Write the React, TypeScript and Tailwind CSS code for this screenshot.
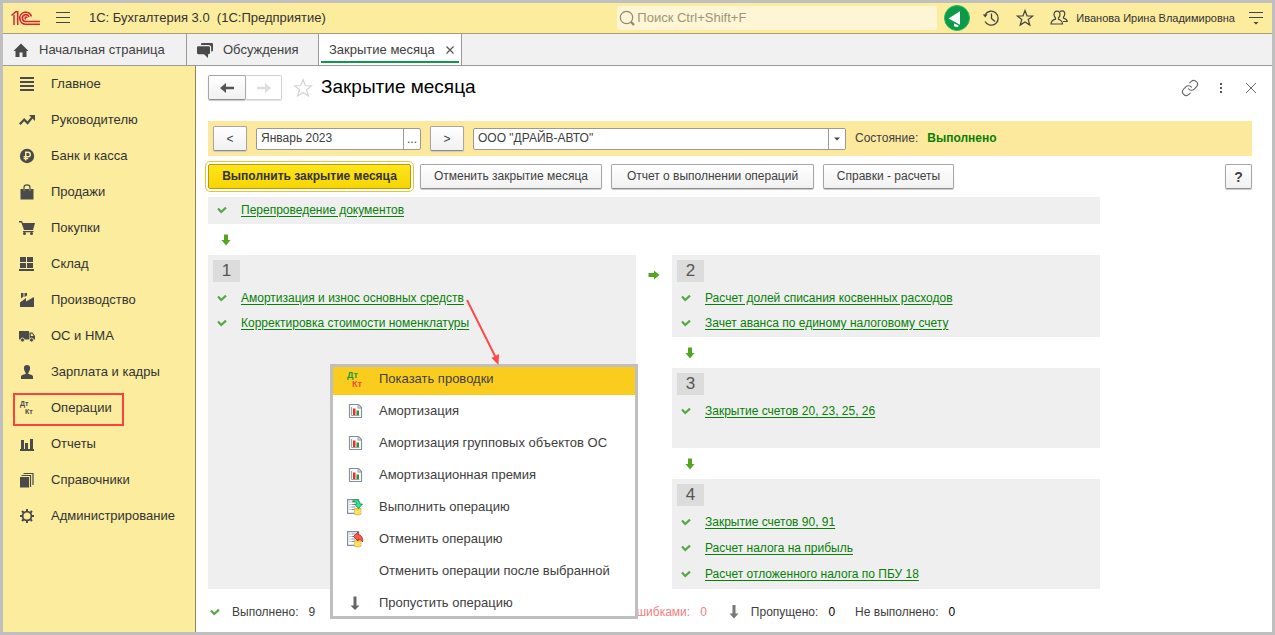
import React from "react";

type IconProps = { children: React.ReactNode; className?: string };

function Glyph({ children, className = "" }: IconProps) {
  return (
    <svg viewBox="0 0 16 16" width="16" height="16" aria-hidden="true" className={`shrink-0 ${className}`}>
      {children}
    </svg>
  );
}

const dark = "#4a4a4a";

const sections: { label: string; icon: React.ReactNode; marked?: boolean }[] = [
  { label: "Главное", icon: <path fill={dark} shapeRendering="crispEdges" d="M1 1h14v2H1zM1 5h14v2H1zM1 9h14v2H1zM1 13h14v2H1z" /> },
  {
    label: "Руководителю",
    icon: (
      <>
        <path d="M.8 12.3 5.2 7.6 8.6 11 13 5.6" fill="none" stroke={dark} strokeWidth="2.2" />
        <path d="M10 3h6v6z" fill={dark} />
      </>
    ),
  },
  {
    label: "Банк и касса",
    icon: (
      <>
        <circle cx="8" cy="8" r="7.2" fill={dark} />
        <path d="M6.7 12.5V4.3h2.400a2.200 2.200 0 0 1 0 4.400H4.600M4.600 10.600h4.600" fill="none" stroke="#fbec9e" strokeWidth="1.4" />
      </>
    ),
  },
  {
    label: "Продажи",
    icon: (
      <>
        <path d="M1.500 5h3v2h1.200V5h4.600v2h1.200V5h3v10.500h-13z" fill={dark} />
        <path d="M5 7V3.200C5 1 6.200.8 8 .8s3 .2 3 2.400V7" fill="none" stroke={dark} strokeWidth="1.2" />
      </>
    ),
  },
  {
    label: "Покупки",
    icon: (
      <>
        <path d="M0 1h3l.8 2H16l-2 7H5L2.300 2.400H0zM4 11h10.500v1.300H4z" fill={dark} />
        <circle cx="5.500" cy="13.500" r="1.500" fill={dark} />
        <circle cx="12.500" cy="13.500" r="1.500" fill={dark} />
      </>
    ),
  },
  { label: "Склад", icon: <path fill={dark} shapeRendering="crispEdges" d="M1 1h6v5H1zM8 1h6v5H8zM1 7h6v5H1zM8 7h6v5H8zM0 13h15v2H0z" /> },
  { label: "Производство", icon: <path fill={dark} d="M1 15V10.500L7 6v3.500L15 5v10zM2 1h2.500v3.500L2 6.500zM5.500 1H8v2.500L5.500 5z" /> },
  {
    label: "ОС и НМА",
    icon: (
      <>
        <path d="M0 3h10v8.500H0zM10.500 4.500h3L16 8v3.500h-5.500z" fill={dark} />
        <path d="M11.800 5.700h1.500L14.600 8h-2.800z" fill="#fbec9e" />
        <circle cx="3.500" cy="12" r="2" fill={dark} stroke="#fbec9e" strokeWidth=".8" />
        <circle cx="12.500" cy="12" r="2" fill={dark} stroke="#fbec9e" strokeWidth=".8" />
      </>
    ),
  },
  { label: "Зарплата и кадры", icon: <path fill={dark} d="M8 1c2 0 3.100 1.200 3.100 3S9.800 8.500 9.300 9v1c3 .6 4.700 1.200 4.700 2.600V15H2v-2.400C2 11.200 3.700 10.600 6.700 10V9C6.200 8.500 4.900 5.800 4.900 4S6 1 8 1z" /> },
  {
    label: "Операции",
    marked: true,
    icon: (
      <g fill={dark} fontFamily="Liberation Sans, sans-serif" fontWeight="700" fontSize="7">
        <text x="1" y="6">Дт</text>
        <text x="6" y="14">Кт</text>
      </g>
    ),
  },
  { label: "Отчеты", icon: <path fill={dark} shapeRendering="crispEdges" d="M2 4h3v9h1V7h3v6h2V3h3v10h1v2H1v-2h1z" /> },
  {
    label: "Справочники",
    icon: (
      <>
        <path d="M1 5h9v10.500H1z" fill={dark} />
        <path d="M2.500 3.500h9V15M4.500 1.500h9.500V13" fill="none" stroke={dark} strokeWidth="1.200" />
      </>
    ),
  },
  {
    label: "Администрирование",
    icon: (
      <g fill="none" stroke={dark}>
        <circle cx="8" cy="8" r="4.400" strokeWidth="1.800" />
        <path strokeWidth="2" d="M8 1v2.500M8 12.500V15M1 8h2.500M12.500 8H15M3 3l1.700 1.700M11.300 11.300 13 13M3 13l1.700-1.700M11.300 4.700 13 3" />
      </g>
    ),
  },
];

const reportIcon = (
  <>
    <path d="M2.500 1.500h9l3 3v10h-12z" fill="#fff" stroke="#8492a0" strokeWidth="1.200" />
    <path d="M11 1.500v3.500h3.500" fill="none" stroke="#8492a0" />
    <path d="M4.500 4v8.500h8" fill="none" stroke="#9aa5b0" />
    <path d="M6 5.500h2.500V12H6z" fill="#f22b1e" />
    <path d="M9.500 7.500H12V12H9.500z" fill="#2f8f2c" />
  </>
);

const sheet = (
  <>
    <path d="M.6.600h11v13.800H.600z" fill="#fff" stroke="#7f8fa0" strokeWidth="1.200" />
    <path d="M2.500 3h1M4.500 3h5M2.500 5.500h1M4.500 5.500h5M2.500 8h1M4.500 8h4M2.500 10.500h1M4.500 10.500h3" stroke="#8492a0" />
    <path d="M7.500 9.500h6.500V15c-1 1.200-5.500 1.200-6.500 0z" fill="#f4cf3e" stroke="#c9a021" strokeWidth=".6" />
    <path d="M7.500 11.500c1.500 1 5 1 6.500 0M7.500 13.500c1.500 1 5 1 6.500 0" fill="none" stroke="#fff3a8" strokeWidth=".9" />
  </>
);

const menu: { label: string; icon?: React.ReactNode }[] = [
  {
    label: "Показать проводки",
    icon: (
      <g fontFamily="Liberation Sans, sans-serif" fontWeight="700" fontSize="9">
        <text x="0" y="7" fill="#169a3c">Дт</text>
        <text x="5" y="16" fill="#e8503a">Кт</text>
      </g>
    ),
  },
  { label: "Амортизация", icon: reportIcon },
  { label: "Амортизация групповых объектов ОС", icon: reportIcon },
  { label: "Амортизационная премия", icon: reportIcon },
  {
    label: "Выполнить операцию",
    icon: (
      <>
        {sheet}
        <path d="M5.500 2.500C6.500-.5 13 0 13 5h2.500l-4 4.500-4-4.500h2.300c0-2-2.300-3-4.300-2.500z" fill="#2be58a" stroke="#128a4b" strokeWidth=".8" />
      </>
    ),
  },
  {
    label: "Отменить операцию",
    icon: (
      <>
        {sheet}
        <path d="M6.500 5.500 11 1v2.500c3.500.5 5 3.500 4.500 7.500-1-2-2.500-2.700-4.500-2.700V10z" fill="#fb5a4a" stroke="#b3201a" strokeWidth=".8" />
      </>
    ),
  },
  { label: "Отменить операции после выбранной" },
  { label: "Пропустить операцию", icon: <path fill="#666" d="M6.500 1.500h3V10.500h3L8 15l-4.500-4.500h3z" /> },
];

function Check() {
  return (
    <svg viewBox="0 0 10 10" width="10" height="10" aria-hidden="true" className="shrink-0">
      <path d="M1 3.500 4.200 7 9 2.600" fill="none" stroke="#55a845" strokeWidth="2.200" />
    </svg>
  );
}

function Arrow({ right = false }: { right?: boolean }) {
  return (
    <svg viewBox="0 0 12 12" width="12" height="12" aria-hidden="true" className={`shrink-0 ${right ? "-rotate-90" : ""}`}>
      <path d="M4 .5h4V6h2.500L6 11.500 1.500 6H4z" fill="#54a51f" />
    </svg>
  );
}

function Operation({ label, height = "h-[25px]" }: { label: string; height?: string }) {
  return (
    <li className={`flex items-center gap-3.5 pl-1 ${height}`}>
      <Check />
      <a href="#" className="text-[#087f08] underline underline-offset-2">{label}</a>
    </li>
  );
}

function Stage({ n, items, className = "", row }: { n: number; items: string[]; className?: string; row?: string }) {
  return (
    <section className={`bg-[#efefef] p-[5px] pb-0.5 ${className}`}>
      <h2 className="flex h-[22px] w-[27px] items-center justify-center bg-[#dcdcdc] text-[17px] text-[#555]">{n}</h2>
      <ul className="mt-[3px]">
        {items.map((item) => (
          <Operation key={item} label={item} height={row} />
        ))}
      </ul>
    </section>
  );
}

function DownGap() {
  return (
    <div className="flex h-[31px] items-center pl-3">
      <Arrow />
    </div>
  );
}

const buttonBase = "h-[25px] shrink-0 rounded-[2px] border border-[#a6a6a6] border-b-[#8c8c8c] bg-linear-to-b from-white to-[#f1f1f1] shadow-[0_1px_1px_#c8c8c8]";

export default function App() {
  return (
    <div className="flex min-h-screen flex-col border-[3px] border-[#bfbfbf] bg-white font-['Liberation_Sans',Arial,sans-serif] text-xs text-[#404040]">
      <header className="flex h-[31px] items-center border-b border-[#a8a074] bg-[#fbec9e] pr-[9px] pl-2">
        <svg viewBox="0 0 30 16" width="30" height="16" role="img" aria-label="1С" className="shrink-0">
          <g fill="none" stroke="#d8232a">
            <path strokeWidth="1.500" d="M.5 5.500 4.700 1.700M3 5.500V15M6.700 1v14M2.500 5.500h1M4 1.700h3" />
            <path strokeWidth="1.600" d="M20.500 6.500A6 6 0 1 0 15 14.200H29" />
            <path strokeWidth="1.600" d="M18 7A3.400 3.400 0 1 0 15 11.500H29" />
            <path strokeWidth="1.400" d="M16 8a1 1 0 1 0-1 1" />
          </g>
        </svg>
        <button type="button" aria-label="Главное меню" className="ml-[15px] shrink-0">
          <svg viewBox="0 0 14 12" width="14" height="12" shapeRendering="crispEdges">
            <path d="M0 0h14v1H0zM0 5h14v1H0zM0 10h14v1H0z" fill="#444" />
          </svg>
        </button>
        <h1 className="ml-[19px] text-[13px] whitespace-pre text-[#333]">1С: Бухгалтерия 3.0  (1С:Предприятие)</h1>
        <label className="ml-auto flex h-6 w-80 items-center gap-0.5 rounded-[2px] bg-[#fdf5d4] pl-0.5">
          <svg viewBox="0 0 16 16" width="16" height="16" aria-hidden="true" className="shrink-0">
            <circle cx="7.500" cy="7.500" r="6.200" fill="none" stroke="#8d8975" strokeWidth="1.200" />
            <path d="m12 12 3 3" stroke="#8d8975" strokeWidth="2.400" />
          </svg>
          <input type="search" aria-label="Поиск" placeholder="Поиск Ctrl+Shift+F" className="min-w-0 flex-1 bg-transparent text-[13px] outline-none placeholder:text-[#9b967c]" />
        </label>
        <button type="button" aria-label="Уведомления" className="ml-[7px] shrink-0">
          <svg viewBox="0 0 26 26" width="26" height="26">
            <circle cx="13" cy="13" r="12.500" fill="#0c9a48" stroke="#2fb765" />
            <path d="M4.500 13.500 16 6.200v13.600zM10 18.500l4.500 1.800-.5 2-4-1z" fill="#fff" />
          </svg>
        </button>
        <button type="button" aria-label="История" className="ml-3 shrink-0">
          <svg viewBox="0 0 18 18" width="18" height="18" fill="none" stroke="#444" strokeWidth="1.300">
            <path d="M3.200 5.500A7 7 0 1 1 3 12.500M9.500 4.500v5l3.500 3" />
            <path d="M.8 5.600 3.200 8.500l2.400-3.200z" fill="#444" stroke="none" />
          </svg>
        </button>
        <button type="button" aria-label="Избранное" className="ml-4 shrink-0">
          <svg viewBox="0 0 18 18" width="18" height="18" fill="none" stroke="#444" strokeWidth="1.200">
            <path d="m9 1.500 2 5.300 5.700.2-4.500 3.500 1.600 5.500L9 12.900 4.200 16l1.600-5.500L1.300 7l5.700-.2z" />
          </svg>
        </button>
        <button type="button" className="ml-4 flex shrink-0 items-center gap-2 text-[11px] text-[#333]">
          <svg viewBox="0 0 18 18" width="18" height="18" aria-hidden="true" fill="none" stroke="#444" strokeWidth="1.200">
            <path d="M7 2.200c2 0 3 1.500 3 3.300 0 1.600-.8 2.700-1.500 3.500v1.200c2.500.8 3.800 1.700 4 4.800H1c.2-3.100 1.500-4 4.500-4.800V9C4.800 8.200 4 7.100 4 5.500c0-1.800 1-3.300 3-3.300z" />
            <path d="M10 2.800c.4-.7 1.200-1 2-1 1.700 0 2.800 1.200 2.800 3 0 1.400-.6 2.400-1.300 3.200v1.200c2.200.6 3.500 1.500 3.700 3.300H13" />
          </svg>
          Иванова Ирина Владимировна
        </button>
        <button type="button" aria-label="Настройки" className="ml-3.5 shrink-0">
          <svg viewBox="0 0 14 14" width="14" height="14">
            <path shapeRendering="crispEdges" d="M0 1h14v1H0zM0 6h14v1H0z" fill="#444" />
            <path d="M4.500 11h5L7 13.500z" fill="#444" />
          </svg>
        </button>
      </header>

      <nav aria-label="Открытые окна" className="flex h-8 border-b border-[#9a9a9a] bg-[#f1f1f1] text-[13px]">
        <a href="#" className="flex w-[184px] shrink-0 items-center gap-2.5 border-r border-[#9a9a9a] pl-2.5">
          <Glyph>
            <path d="M8 1.500 0.500 9h2v6h4v-4.500h3V15h4V9h2z" fill={dark} />
          </Glyph>
          Начальная страница
        </a>
        <a href="#" className="flex w-[132px] shrink-0 items-center gap-2.5 border-r border-[#9a9a9a] pl-2.5">
          <Glyph>
            <path d="M4 3V2.300Q4 1 5.300 1h9.400Q16 1 16 2.300v6q0 1.300-1.300 1.300H14.200V5.500q0-2.500-2.500-2.500z" fill={dark} />
            <path d="M1.300 4.200h10.400Q13 4.200 13 5.500v5.300q0 1.400-1.300 1.400H11V16l-4-3.800H1.300Q0 12.200 0 10.800V5.500q0-1.300 1.300-1.300z" fill={dark} />
          </Glyph>
          Обсуждения
        </a>
        <div className="flex w-[143px] shrink-0 flex-col border-r border-[#9a9a9a] bg-white px-0.5 pb-0.5">
          <div className="flex flex-1 items-center justify-between border-b-2 border-[#0c9a48] pt-1 pr-[5px] pl-2">
            <a href="#" aria-current="page">Закрытие месяца</a>
            <button type="button" aria-label="Закрыть вкладку">
              <svg viewBox="0 0 8 8" width="8" height="8" stroke="#555" strokeWidth="1.200">
                <path d="m.5.500 7 7M7.500.500l-7 7" />
              </svg>
            </button>
          </div>
        </div>
      </nav>

      <div className="flex flex-1">
        <nav aria-label="Разделы" className="w-[193px] shrink-0 border-r border-[#8f8758] bg-[#fbec9e] text-[13px] text-[#333]">
          <ul>
            {sections.map((s) => (
              <li key={s.label} className="relative">
                <a href="#" className="flex h-9 items-center gap-4 pl-4">
                  <Glyph>{s.icon}</Glyph>
                  {s.label}
                </a>
                {s.marked && <span className="pointer-events-none absolute top-[3px] left-2.5 h-[33px] w-[111px] border-2 border-[#ff4040]" />}
              </li>
            ))}
          </ul>
        </nav>

        <main className="min-w-0 flex-1 pt-[9px] pr-5 pl-3">
          <div className="flex h-[25px] items-center">
            <button type="button" aria-label="Назад" className={`${buttonBase} flex w-[38px] items-center justify-center`}>
              <svg viewBox="0 0 14 12" width="14" height="12">
                <path d="M0 6 6 1v3.700h8v2.600H6V11z" fill="#555" />
              </svg>
            </button>
            <button type="button" aria-label="Вперед" disabled className="flex h-[25px] w-9 items-center justify-center rounded-r-[2px] border border-l-0 border-[#d2d2d2] shadow-[0_1px_1px_#e0e0e0]">
              <svg viewBox="0 0 14 12" width="14" height="12">
                <path d="M14 6 8 1v3.700H0v2.600h8V11z" fill="#ddd" />
              </svg>
            </button>
            <button type="button" aria-label="В избранное" className="ml-[11px]">
              <svg viewBox="0 0 20 20" width="20" height="20" fill="none" stroke="#d4d4d4" strokeWidth="1.200">
                <path d="m10 1.500 2.300 6 6.200.3-4.900 3.900 1.700 6.300-5.300-3.500L4.700 18l1.700-6.300L1.500 7.800l6.200-.3z" />
              </svg>
            </button>
            <h2 className="ml-2 pb-0.5 text-[19px] text-black">Закрытие месяца</h2>
            <div className="-mr-[5px] ml-auto flex items-center">
              <button type="button" aria-label="Ссылка">
                <svg viewBox="0 0 24 24" width="18" height="18" fill="none" stroke="#666" strokeWidth="1.500" strokeLinecap="round">
                  <path d="M10 13a5 5 0 0 0 7.540.540l3-3a5 5 0 0 0-7.070-7.070l-1.720 1.710" />
                  <path d="M14 11a5 5 0 0 0-7.540-.540l-3 3a5 5 0 0 0 7.070 7.070l1.710-1.710" />
                </svg>
              </button>
              <button type="button" aria-label="Еще" className="ml-[19px]">
                <svg viewBox="0 0 6 12" width="6" height="12" shapeRendering="crispEdges">
                  <path d="M2 1h2v2H2zM2 5h2v2H2zM2 9h2v2H2z" fill="#555" />
                </svg>
              </button>
              <button type="button" aria-label="Закрыть" className="ml-[21px]">
                <svg viewBox="0 0 12 12" width="12" height="12" stroke="#666">
                  <path d="m1 1 10 10M11 1 1 11" />
                </svg>
              </button>
            </div>
          </div>

          <div className="mt-[21px] flex h-[35px] items-center bg-[#fce99e] px-[5px]">
            <button type="button" aria-label="Предыдущий месяц" className={`${buttonBase} w-[34px]`}>&lt;</button>
            <div className="ml-[9px] flex h-[22px] w-[165px] shrink-0 rounded-[2px] border border-[#999] bg-white">
              <input aria-label="Месяц" defaultValue="Январь 2023" className="min-w-0 flex-1 px-1 pb-0.5 outline-none" />
              <button type="button" aria-label="Выбрать месяц" className="w-[17px] border-l border-[#999]">...</button>
            </div>
            <button type="button" aria-label="Следующий месяц" className={`${buttonBase} ml-[9px] w-[34px]`}>&gt;</button>
            <div className="relative ml-[9px] h-[22px] max-w-[373px] flex-1 rounded-[2px] border border-[#999] bg-white">
              <select aria-label="Организация" className="h-full w-full appearance-none px-1 pb-0.5 outline-none">
                <option>ООО "ДРАЙВ-АВТО"</option>
              </select>
              <span className="pointer-events-none absolute inset-y-0 right-0 flex w-[17px] items-center justify-center border-l border-[#999] bg-white">
                <svg viewBox="0 0 6 4" width="6" height="4">
                  <path d="M0 .5h6l-3 3z" fill="#444" />
                </svg>
              </span>
            </div>
            <span className="ml-[9px] pb-0.5">Состояние:</span>
            <strong className="ml-[9px] pb-0.5 text-[#087f08]">Выполнено</strong>
          </div>

          <div className="mt-2 flex h-[25px] items-center gap-[9px]">
            <button type="button" className="h-[25px] w-[203px] shrink-0 rounded-[2px] border border-[#b39b0e] bg-linear-to-b from-[#ffe51a] to-[#f6d500] pb-0.5 font-bold text-[#333] outline outline-offset-2 outline-[#f5c02a]">Выполнить закрытие месяца</button>
            <button type="button" className={`${buttonBase} w-[182px] pb-0.5`}>Отменить закрытие месяца</button>
            <button type="button" className={`${buttonBase} w-[203px] pb-0.5`}>Отчет о выполнении операций</button>
            <button type="button" className={`${buttonBase} w-[131px] pb-0.5`}>Справки - расчеты</button>
            <button type="button" aria-label="Справка" className={`${buttonBase} ml-auto w-[27px] text-sm font-bold`}>?</button>
          </div>

          <div className="mt-2 max-w-[892px]">
            <ul className="bg-[#efefef] pb-0.5 pl-[5px]">
              <Operation label="Перепроведение документов" />
            </ul>
            <DownGap />
            <div className="flex">
              <div className="relative flex flex-1">
                <Stage n={1} items={["Амортизация и износ основных средств", "Корректировка стоимости номенклатуры"]} className="flex-1" />
                <div role="menu" className="absolute top-[109px] left-[122px] z-10 w-[308px] border-[3px] border-[#bfbfbf] bg-white text-[13px]">
                  {menu.map((m, i) => (
                    <button
                      key={m.label}
                      type="button"
                      role="menuitem"
                      className={`flex w-full items-center gap-4 pl-3.5 text-left ${i === 0 ? "h-7 bg-[#facc1e] pb-1" : i === menu.length - 1 ? "h-[29px] pt-0.5" : "h-8"}`}
                    >
                      {m.icon ? <Glyph className="overflow-visible">{m.icon}</Glyph> : <span className="w-4 shrink-0" />}
                      {m.label}
                    </button>
                  ))}
                </div>
                <svg viewBox="0 0 36 68" width="36" height="68" aria-hidden="true" className="pointer-events-none absolute top-[43px] left-[257px] z-20">
                  <path d="M2 2 31 60" stroke="#ff4a4a" strokeWidth="2" />
                  <path d="m26.500 60 7.500-4-.5 11z" fill="#ff4a4a" />
                </svg>
              </div>
              <div className="flex w-9 justify-center pt-3.5">
                <Arrow right />
              </div>
              <div className="flex-1">
                <Stage n={2} items={["Расчет долей списания косвенных расходов", "Зачет аванса по единому налоговому счету"]} />
                <DownGap />
                <Stage n={3} items={["Закрытие счетов 20, 23, 25, 26"]} className="min-h-20" />
                <DownGap />
                <Stage n={4} row="h-[26px]" items={["Закрытие счетов 90, 91", "Расчет налога на прибыль", "Расчет отложенного налога по ПБУ 18"]} />
              </div>
            </div>
          </div>

          <footer className="mt-2 flex h-[30px] items-center whitespace-nowrap">
            <div className="flex w-[346px] shrink-0 items-center pl-0.5">
              <Check />
              <span className="ml-3">Выполнено:</span>
              <span className="ml-2.5">9</span>
            </div>
            <div className="flex items-center text-[#f08080]">
              <span>Выполнено с ошибками:</span>
              <span className="ml-2.5">0</span>
            </div>
            <svg viewBox="0 0 10 14" width="10" height="14" aria-hidden="true" className="ml-[22px] shrink-0">
              <path d="M3.500 0h3v8.500H9.500L5 13.500.500 8.500h3z" fill="#777" />
            </svg>
            <span className="ml-3">Пропущено:</span>
            <span className="ml-2.5 text-black">0</span>
            <span className="ml-5">Не выполнено:</span>
            <span className="ml-2.5 text-black">0</span>
          </footer>
        </main>
      </div>
    </div>
  );
}
